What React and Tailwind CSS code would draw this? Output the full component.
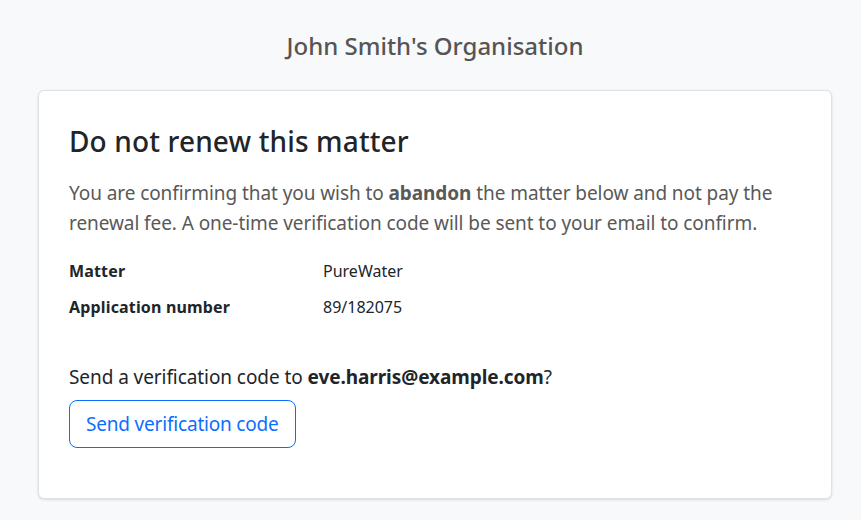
export default function App() {
  return (
    <div
      className="min-h-[520px] bg-[#f8f9fa] pl-[38px] pr-[29px] pt-[28px] text-[#212529]"
      style={{ fontFamily: '"Noto Sans", "Open Sans", sans-serif' }}
    >
      <h1 className="mb-[26px] text-center text-[24px] leading-9 font-medium text-[#555555]">
        John Smith's Organisation
      </h1>

      <div className="rounded-md border border-[#dee2e6] bg-white px-[30px] pt-[33px] pb-[50px] shadow-sm">
        <h2 className="text-[28px] leading-[34px] font-medium tracking-[0.005em] text-[#212529]">
          Do not renew this matter
        </h2>

        <p className="mt-[20px] text-[19px] leading-[30px] tracking-[-0.004em] text-[#595959]">
          You are confirming that you wish to <strong className="font-bold">abandon</strong> the matter below and not pay the
          renewal fee. A one-time verification code will be sent to your email to confirm.
        </p>

        <div className="mt-[15px] grid grid-cols-[254px_1fr] text-[16px]">
          <div className="py-1.5 font-bold leading-6 tracking-[0.01em]">Matter</div>
          <div className="py-1.5 leading-6">PureWater</div>
          <div className="py-1.5 font-bold leading-6 tracking-[0.01em]">Application number</div>
          <div className="py-1.5 leading-6">89/182075</div>
        </div>

        <p className="mt-[37px] text-[19px] leading-[30px] tracking-[-0.004em]">
          Send a verification code to <strong className="font-bold">eve.harris@example.com</strong>?
        </p>

        <button className="mt-[8px] rounded-lg border border-[#0d6efd] bg-white px-4 py-2 text-[19px] leading-[30px] tracking-[-0.01em] text-[#0d6efd]">
          Send verification code
        </button>
      </div>
    </div>
  )
}
